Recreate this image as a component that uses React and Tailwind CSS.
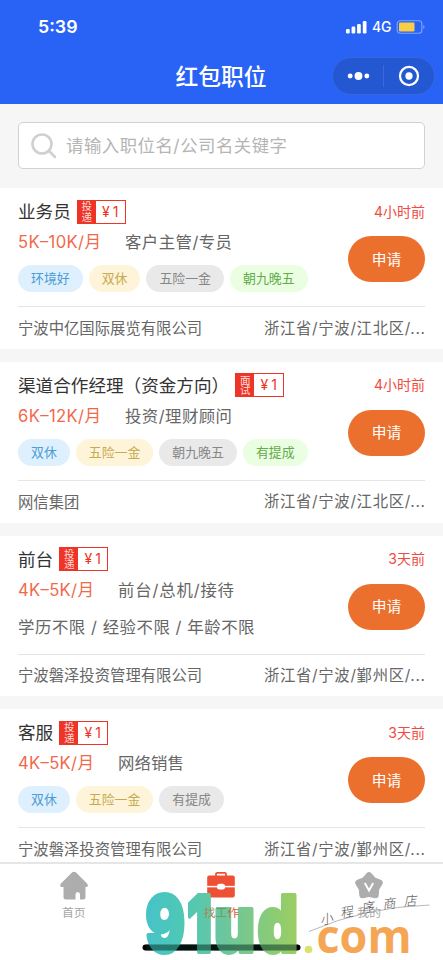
import React from 'react';

const TAG_COLORS = [
  'bg-[#def0fe] text-[#4a9bd6]',
  'bg-[#fdf4da] text-[#c8aa4c]',
  'bg-[#e9e9e9] text-[#868686]',
  'bg-[#eafee2] text-[#62ab4a]',
];

const JOBS = [
  { title: '业务员', kind: ['投', '递'], salary: '5K–10K/月', salaryW: 83, category: '客户主管/专员', categoryW: 107, tags: ['环境好', '双休', '五险一金', '朝九晚五'], time: '4小时前', company: '宁波中亿国际展览有限公司', place: '浙江省/宁波/江北区/...' },
  { title: '渠道合作经理（资金方向）', kind: ['面', '试'], salary: '6K–12K/月', salaryW: 83, category: '投资/理财顾问', categoryW: 107, tags: ['双休', '五险一金', '朝九晚五', '有提成'], time: '4小时前', company: '网信集团', place: '浙江省/宁波/江北区/...' },
  { title: '前台', kind: ['投', '递'], salary: '4K–5K/月', salaryW: 76, category: '前台/总机/接待', categoryW: 116, note: '学历不限 / 经验不限 / 年龄不限', time: '3天前', company: '宁波磐泽投资管理有限公司', place: '浙江省/宁波/鄞州区/...' },
  { title: '客服', kind: ['投', '递'], salary: '4K–5K/月', salaryW: 76, category: '网络销售', categoryW: 66, tags: ['双休', '五险一金', '有提成'], time: '3天前', company: '宁波磐泽投资管理有限公司', place: '浙江省/宁波/鄞州区/...' },
];

// One line of text fitted to a fixed width.
function FitText({ children, width, size, className = '' }) {
  return (
    <svg width={width} height="24" className={`block shrink-0 overflow-visible font-['Inter','Noto_Sans_CJK_SC',sans-serif] font-[370] ${className}`}>
      <text x="0" y="18" textLength={width} lengthAdjust="spacing" fontSize={size} fill="currentColor">{children}</text>
    </svg>
  );
}

function Header() {
  return (
    <header className="h-[104px] shrink-0 bg-[#2963f6] text-white">
      <div className="flex h-[54px] items-center justify-between pl-[38px] pr-[17px]">
        <span className="font-['Inter'] text-[17.8px] font-semibold leading-none">5:39</span>
        <div className="flex items-center">
          <svg width="21" height="14" fill="white">
            <rect x="0" y="9" width="3.7" height="4.5" rx="1.2" />
            <rect x="5.6" y="6.5" width="3.7" height="7" rx="1.2" />
            <rect x="11.1" y="4" width="3.7" height="9.5" rx="1.2" />
            <rect x="16.8" y="1" width="3.7" height="12.5" rx="1.2" />
          </svg>
          <span className="ml-[5px] w-[20px] font-['Inter'] text-[14px] font-medium leading-none tracking-[-0.3px]">4G</span>
          <svg className="ml-[4px]" width="30" height="14">
            <rect x="1.2" y="0.7" width="24.6" height="12.6" rx="3" fill="none" stroke="#82a4fb" strokeWidth="1.1" />
            <rect x="3" y="2.5" width="15.5" height="9" rx="1.3" fill="#f8ce46" />
            <path d="M27.3 4.8c1.6.8 1.6 3.6 0 4.4z" fill="#82a4fb" />
          </svg>
        </div>
      </div>
      <div className="grid grid-cols-[1fr_auto_1fr] items-center pr-[8px]">
        <span />
        <h1 className="pl-[7px] text-[22.8px] font-medium leading-[44px]">红包职位</h1>
        <div className="flex h-[38px] w-[103px] items-center justify-self-end rounded-full border border-[#3768e0] bg-[#2458d3]">
          <svg className="w-1/2" height="36" viewBox="0 0 51 36" fill="white">
            <circle cx="17.500" cy="18" r="2.500" /><circle cx="26" cy="18" r="4" /><circle cx="34.500" cy="18" r="2.500" />
          </svg>
          <i className="h-[22px] w-px bg-[#3b69da]" />
          <svg className="w-1/2" height="36" viewBox="0 0 51 36">
            <circle cx="25.500" cy="18" r="9.200" fill="none" stroke="white" strokeWidth="2.300" />
            <circle cx="25.500" cy="18" r="3.700" fill="white" />
          </svg>
        </div>
      </div>
    </header>
  );
}

function Card({ job }) {
  return (
    <article className="mb-[13px] h-[160.8px] bg-white px-[18px] pt-[11px]">
      <div className="flex h-[25px] items-center">
        <h2 className="relative -top-[0.7px] text-[17.6px] leading-none text-[#333]">{job.title}</h2>
        <div className="ml-[6px] flex h-[24px] w-[49px] border border-[#ee3426] bg-white text-[#ee3426]">
          <div className="flex w-[18px] shrink-0 flex-col items-center justify-center bg-[#ee3426] text-[10.5px] leading-[10.5px] text-[#ffdcd8]">
            <span>{job.kind[0]}</span><span>{job.kind[1]}</span>
          </div>
          <div className="flex flex-1 items-center justify-center gap-[3px] font-['Inter'] text-[14px] leading-none"><span>¥</span><span>1</span></div>
        </div>
        <span className="ml-auto font-['Inter','Noto_Sans_CJK_SC',sans-serif] text-[14px] leading-none text-[#f04b40]">{job.time}</span>
      </div>
      <div className="flex h-[82px] justify-between">
        <div>
          <div className="flex h-[36px] items-center gap-[24px]">
            <FitText width={job.salaryW} size={16.6} className="text-[#f1694a]">{job.salary}</FitText>
            <FitText width={job.categoryW} size={16.4} className="text-[#666]">{job.category}</FitText>
          </div>
          {job.tags ? (
            <div className="mt-[5px] flex gap-[6px]">
              {job.tags.map((tag, i) => (
                <span key={tag} className={`h-[27px] rounded-full px-[13px] text-[12.9px] leading-[26px] ${TAG_COLORS[i]}`}>{tag}</span>
              ))}
            </div>
          ) : (
            <div className="mt-[7px] text-[#666]"><FitText width={236.5} size={16.4}>{job.note}</FitText></div>
          )}
        </div>
        <button className="mt-[12px] h-[46px] w-[77px] shrink-0 rounded-full bg-[#ec702d] text-[14.8px] leading-none text-white">申请</button>
      </div>
      <div className="flex h-[42px] items-center justify-between border-t border-[#e5e5e5] text-[15.35px] font-[370] leading-none text-[#666]">
        <span>{job.company}</span>
        <FitText width={161} size={15.35}>{job.place}</FitText>
      </div>
    </article>
  );
}

function Watermark() {
  return (
    <svg className="pointer-events-none absolute bottom-0 left-0 overflow-visible" width="443" height="98" viewBox="0 862 443 98">
      <defs>
        <linearGradient id="mark" gradientUnits="userSpaceOnUse" x1="146" y1="0" x2="297" y2="0">
          <stop offset="0" stopColor="#46c3c8" /><stop offset=".25" stopColor="#4fc8b4" />
          <stop offset=".5" stopColor="#69c6a0" /><stop offset="1" stopColor="#9bce62" />
        </linearGradient>
      </defs>
      <rect x="142.5" y="944.5" width="158" height="6" rx="3" fill="#000" />
      <g fontFamily="Inter" fontWeight="900" fontSize="78" fill="url(#mark)" stroke="url(#mark)" strokeWidth="4" strokeLinejoin="round">
        <text x="145.500" y="952" textLength="39.500" lengthAdjust="spacingAndGlyphs">9</text>
        <text x="187" y="952" textLength="25" lengthAdjust="spacingAndGlyphs">1</text>
        <text x="214" y="952" textLength="41" lengthAdjust="spacingAndGlyphs">u</text>
        <text x="257.500" y="952" textLength="40.500" lengthAdjust="spacingAndGlyphs">d</text>
      </g>
      <rect x="146" y="944.5" width="151" height="6" fill="#002a20" opacity=".5" />
      <circle cx="308.500" cy="949.500" r="3.800" fill="#d9e36b" />
      <text x="316.500" y="953" fontFamily="Open Sans" fontWeight="700" fontSize="46.500" fill="#f5a655" textLength="95" lengthAdjust="spacingAndGlyphs">com</text>
      <path d="M309 931.5Q365 907 429.5 905" fill="none" stroke="#999" strokeWidth=".7" />
      <g fill="#555" fontFamily="Noto Sans CJK SC" fontWeight="300" fontSize="13">
        <text transform="translate(321 925) rotate(-12) skewX(-12)">小</text>
        <text transform="translate(341 918) rotate(-10) skewX(-12)">程</text>
        <text transform="translate(362 913) rotate(-9) skewX(-12)">序</text>
        <text transform="translate(383 909) rotate(-6) skewX(-12)">商</text>
        <text transform="translate(404 906) rotate(-4) skewX(-12)">店</text>
      </g>
    </svg>
  );
}

function TabBar() {
  return (
    <nav className="relative isolate grid h-[98px] shrink-0 grid-cols-3 border-t-2 border-[#e6e6e6] bg-white text-[11.8px] leading-none text-[#a5a5a5]">
      <div className="flex flex-col items-center pt-[7px]">
        <svg width="30" height="30" fill="#adadad">
          <path d="M13.200 1.300Q15 0 16.800 1.300L28 12.500Q30.500 16 26.500 16V26Q26.500 28.500 24 28.500H21V23.500Q21 21 18.800 21T16.500 23.500V28.500H7Q4.500 28.500 4.500 26V16Q-.5 16 2 12.500Z" />
        </svg>
        <span className="mt-[5px]">首页</span>
      </div>
      <div className="flex flex-col items-center pt-[7px]">
        <svg width="30" height="30">
          <path d="M10 5V3Q10 1.800 11.200 1.800H18.800Q20 1.800 20 3V5" fill="none" stroke="#ed5035" strokeWidth="1.800" />
          <rect x="1.200" y="4.500" width="27.600" height="22" rx="2" fill="#ed5035" />
          <path d="M1 15.600H29" stroke="white" strokeWidth="1.500" />
          <rect x="11" y="12.800" width="8" height="5.800" rx="2.500" fill="white" />
        </svg>
        <span className="relative z-10 mt-[5px]">
          <span className="text-[#a58a50]">找</span><span className="text-[#6f9a58]">工</span><span className="text-[#cf643c]">作</span>
        </span>
      </div>
      <div className="flex flex-col items-center pt-[7px]">
        <svg width="30" height="30">
          <path d="M15 4.500L19.500 9.500L25.500 11.800L22 17.500L21.500 24L15 22.500L8.500 24L8 17.500L4.500 11.800L10.500 9.500Z" fill="#adadad" stroke="#adadad" strokeWidth="6.500" strokeLinejoin="round" />
          <path d="M10.800 12L15 19.500L19.200 12" fill="none" stroke="white" strokeWidth="1.900" />
        </svg>
        <span className="mt-[5px]">我的</span>
      </div>
      <Watermark />
    </nav>
  );
}

export default function App() {
  return (
    <div className="flex h-[960px] w-[443px] flex-col overflow-hidden bg-[#f6f6f6] font-['Noto_Sans_CJK_SC',sans-serif] antialiased">
      <Header />
      <main className="min-h-0 flex-1 overflow-hidden">
        <div className="h-[84px] px-[18px] pt-[18px]">
          <div className="flex h-[47px] items-center rounded-[5px] border border-[#d2d2d2] bg-white pl-[12px] text-[#b5b5b5]">
            <svg width="26" height="26" fill="none" stroke="#d0d0d0" strokeWidth="2.600">
              <circle cx="11" cy="11" r="9.500" /><path d="M18 18L24 24" strokeLinecap="round" />
            </svg>
            <span className="ml-[9px]"><FitText width={221} size={17.4}>请输入职位名/公司名关键字</FitText></span>
          </div>
        </div>
        {JOBS.map((job, i) => <Card key={i} job={job} />)}
      </main>
      <TabBar />
    </div>
  );
}
